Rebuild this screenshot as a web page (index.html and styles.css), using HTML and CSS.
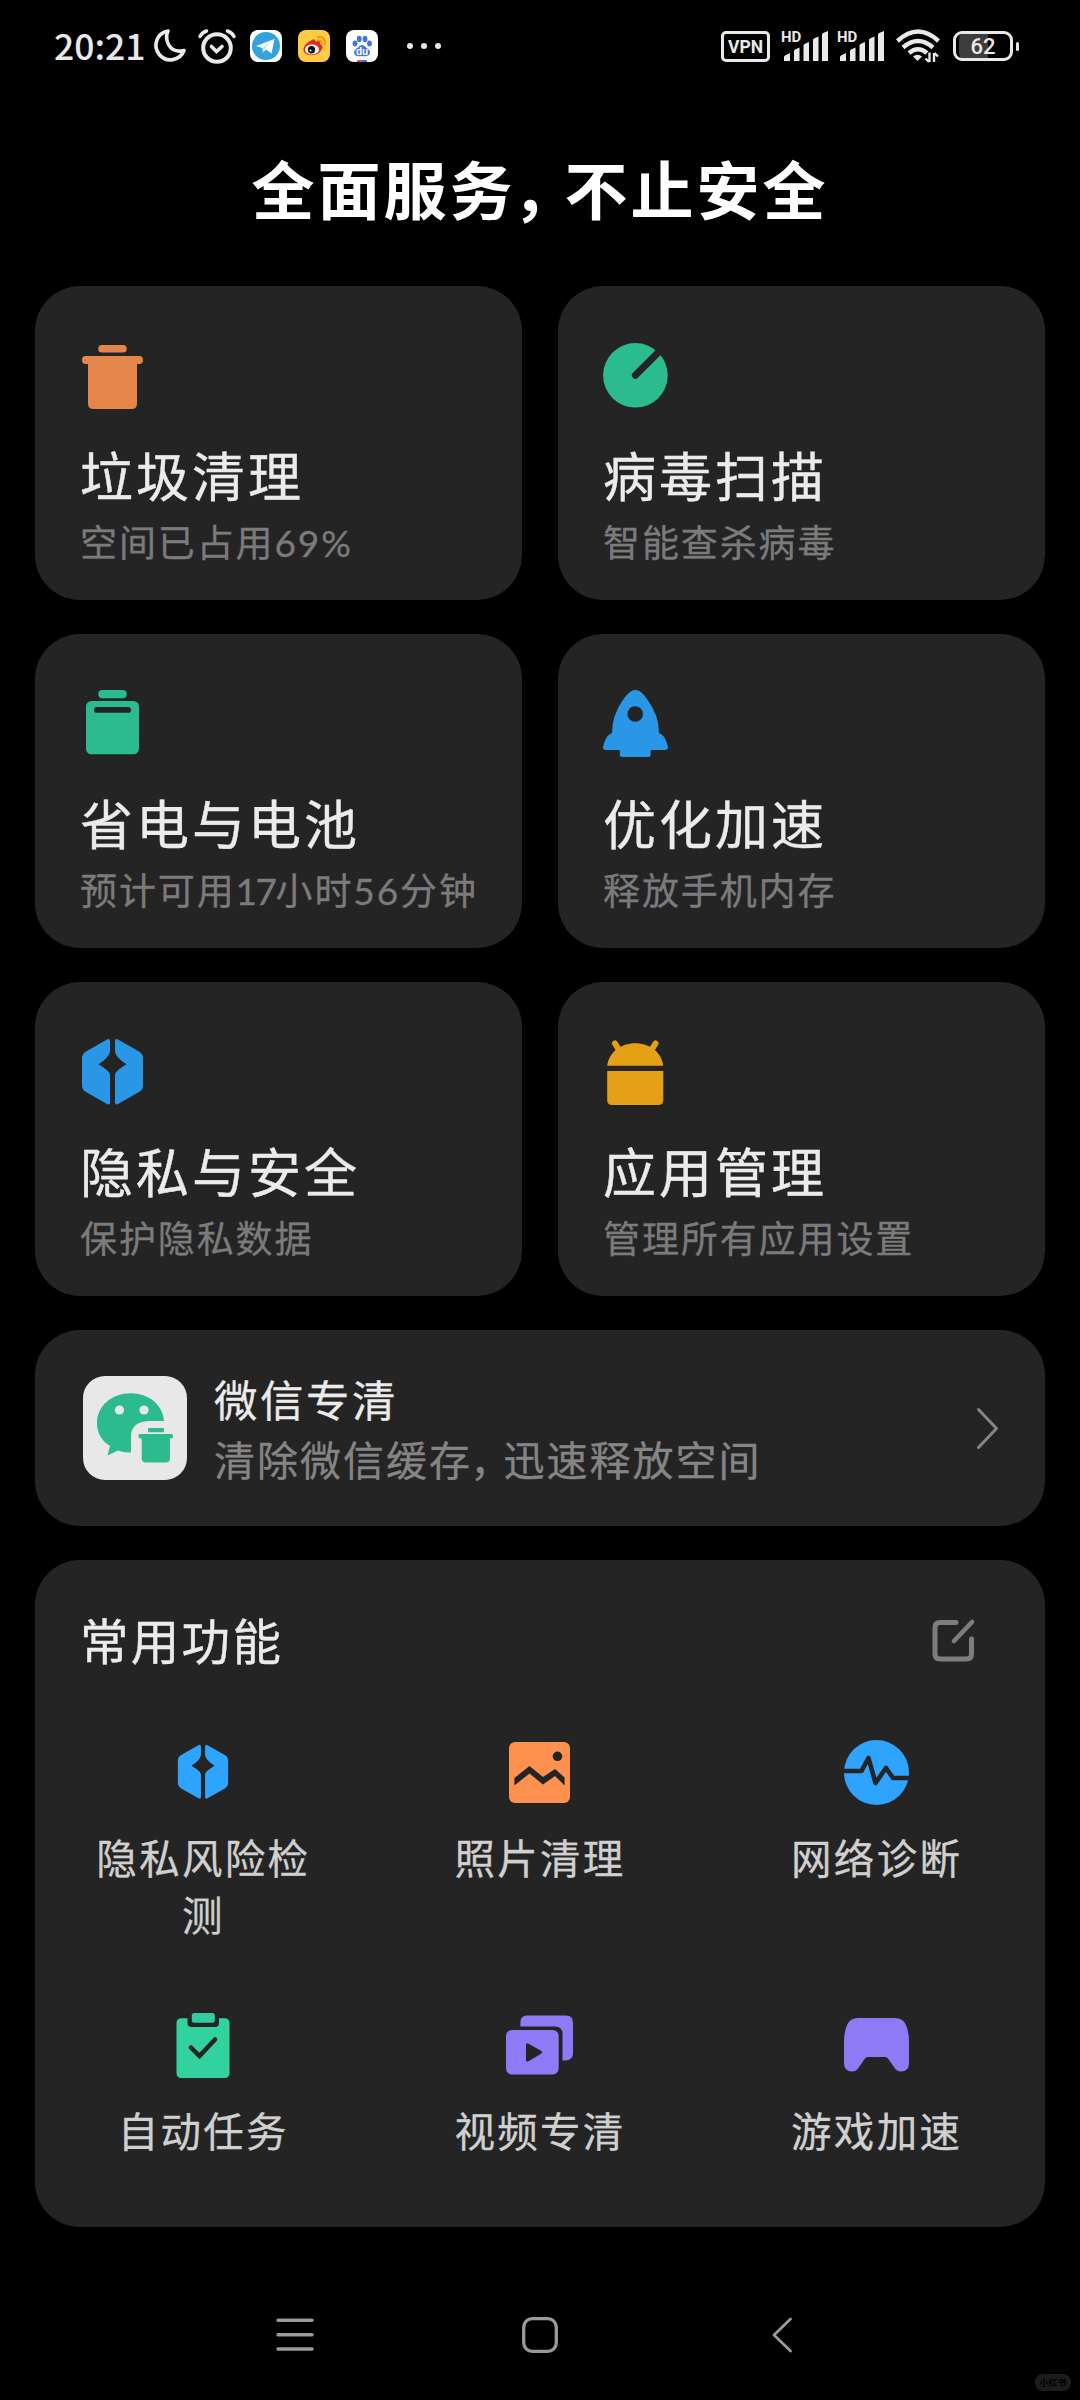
FILE: index.html
```html
<!DOCTYPE html>
<html lang="zh-CN">
<head>
<meta charset="utf-8">
<title>手机管家</title>
<link rel="stylesheet" href="styles.css">
</head>
<body>
<svg class="defs" width="0" height="0">
  <symbol id="shield" viewBox="0 0 65 68">
    <path d="M27 1.5Q30 0 30 3V13Q30 19 18.5 26.3Q30 33 30 37V64.500Q30 67.500 27 66L6 54Q2 51.500 2 47.500V20Q2 16 6 13.500Z"/>
    <path d="M38 1.500Q35 0 35 3V13Q35 19 46.500 26.300Q35 33 35 37V64.500Q35 67.500 38 66L59 54Q63 51.500 63 47.500V20Q63 16 59 13.500Z"/>
  </symbol>
  <symbol id="signal" viewBox="0 0 46 31">
    <path d="M2 30V26Q2 25 3 24.500L8 22V30ZM12 30V20Q12 19 13 18.500L17.500 16.500V30ZM21.500 30V15Q21.500 13.500 22.500 13L27 11V30ZM31 30V9Q31 8 32 7.500L36.500 5.500V30ZM40 30V4Q40 2.500 41 2L46 0V30Z"/>
  </symbol>
</svg>

<header class="status">
  <div class="status-left">
    <span class="time">20:21</span>
    <svg class="moon" width="34" height="34" viewBox="0 0 34 34"><path d="M16 2A14.500 14.500 0 1 0 32 21.500Q21 24 16.500 15.500Q13 8.500 16 2Z" fill="none" stroke="#e9e9e9" stroke-width="3.600" stroke-linejoin="round"/></svg>
    <svg class="alarm" width="38" height="35" viewBox="0 0 38 35"><g fill="none" stroke="#e9e9e9" stroke-width="4" stroke-linecap="round"><circle cx="19" cy="19" r="13.800"/><path d="M13.500 17.500L18.500 22.500L24 17.500" stroke-width="3.600"/><path d="M2 7.500Q4 3.500 8.500 2M36 7.500Q34 3.500 29.500 2" stroke-width="3.500"/></g></svg>
    <svg class="app" width="32" height="32" viewBox="0 0 32 32"><rect width="32" height="32" rx="8" fill="#fff"/><circle cx="16" cy="16" r="14" fill="#34a3dc"/><path d="M6 16L24.500 9L21.500 23.500L16 19.500L13 22.500L12.500 18Z" fill="#fff"/><path d="M12.500 18L20 12.500L14.500 18.700L13 22.500Z" fill="#bcdcf0"/></svg>
    <svg class="app" width="32" height="32" viewBox="0 0 32 32"><rect width="32" height="32" rx="8" fill="#fdcb45"/><path d="M14 10Q17 8 17.500 11.500Q23 9.500 22 14Q26 15.500 23.500 20Q20 26 12 25Q5 24 5.500 18.500Q7 13 14 10Z" fill="#dc2b1f"/><ellipse cx="14" cy="19.500" rx="7" ry="5" fill="#fff"/><circle cx="13.500" cy="19.800" r="3.700" fill="#111"/><circle cx="12.500" cy="20.500" r="1" fill="#fff"/><path d="M20 7Q27 6 27 14M20 10.500Q24 10 23.500 14" fill="none" stroke="#f0920f" stroke-width="1.800" stroke-linecap="round"/></svg>
    <svg class="app" width="32" height="32" viewBox="0 0 32 32"><rect width="32" height="32" rx="8" fill="#fff"/><g fill="#4474d9"><ellipse cx="9" cy="13.500" rx="2.400" ry="3"/><ellipse cx="13.200" cy="9" rx="2.400" ry="3.200"/><ellipse cx="19" cy="9" rx="2.400" ry="3.200"/><ellipse cx="23.500" cy="13.500" rx="2.400" ry="3"/><path d="M16 15Q18.500 15 20 17.500Q24.500 20.500 24 23Q23 27 16 26Q9 27 8 23Q8 20 12 17.500Q13.500 15 16 15Z"/></g><text x="16" y="24.500" text-anchor="middle" class="du">du</text><path d="M11 30H16V32H11Z" fill="#e4504a"/><path d="M16 30H21V32H16Z" fill="#4474d9"/></svg>
    <svg class="dots" width="34" height="6" viewBox="0 0 34 6" fill="#e9e9e9"><circle cx="3" cy="3" r="3"/><circle cx="17" cy="3" r="3"/><circle cx="31" cy="3" r="3"/></svg>
  </div>
  <div class="status-right">
    <span class="vpn">VPN</span>
    <span class="sim"><span class="hd">HD</span><svg width="46" height="31"><use href="#signal"/></svg></span>
    <span class="sim"><span class="hd">HD</span><svg width="46" height="31"><use href="#signal"/></svg></span>
    <svg class="wifi" width="44" height="34" viewBox="0 0 44 34"><g fill="none" stroke="#e9e9e9" stroke-width="4.500"><path d="M1.500 12Q22 -7 42.500 12"/><path d="M7 18.500Q22 5.500 37 18.500"/><path d="M13 24Q22 16.500 31 24"/></g><path d="M17 27.500Q21.500 24 26 27.500L21.500 32Z" fill="#e9e9e9"/><path d="M33.500 23.500V33M33 33L29.500 29.500M38 33V24M38.500 24L42 27.500" fill="none" stroke="#e9e9e9" stroke-width="2.400"/></svg>
    <span class="battery">62</span><span class="nub"></span>
  </div>
</header>

<main class="content">
  <h1 class="headline">全面服务<span class="comma">，</span>不止安全</h1>

  <section class="grid">
    <article class="card">
      <svg class="card-icon orange" viewBox="0 0 65 68"><rect x="18.300" y="3" width="28.400" height="7.500" rx="3.500"/><path d="M5.500 14H59.500Q63 14 63 18T59.500 22H57V61.500Q57 67 51.500 67H13.500Q8 67 8 61.500V22H5.500Q2 22 2 18T5.500 14Z"/></svg>
      <h2>垃圾清理</h2><p>空间已占用69%</p>
    </article>
    <article class="card">
      <svg class="card-icon green" viewBox="0 0 65 68"><circle cx="32.400" cy="33.300" r="32.300"/><path class="cut" d="M32.400 33.300L60 5.700" stroke-width="7"/></svg>
      <h2>病毒扫描</h2><p>智能查杀病毒</p>
    </article>
    <article class="card">
      <svg class="card-icon green" viewBox="0 0 65 68"><rect x="18.300" y="0" width="28.400" height="8.300" rx="4"/><rect x="6" y="11" width="53" height="53.300" rx="5.500"/><rect class="hole" x="14" y="17" width="37" height="5.800" rx="2.900"/></svg>
      <h2>省电与电池</h2><p>预计可用<span class="tight">17</span>小时56分钟</p>
    </article>
    <article class="card">
      <svg class="card-icon blue" viewBox="0 0 65 68"><path d="M32.400 0Q38 0 44 9Q56 25 56 43Q60 44.500 61.500 47.500Q64 52 65 57Q65 60 62 60H47.700V64.500Q47.700 67 45 67H19.500Q16.800 67 16.800 64.500V60H3Q0 60 0 57Q1 52 3.500 47.500Q5 44.500 9 43Q9 25 20.500 9Q27 0 32.400 0Z"/><circle class="hole" cx="32.200" cy="24" r="7.800"/></svg>
      <h2>优化加速</h2><p>释放手机内存</p>
    </article>
    <article class="card">
      <svg class="card-icon blue" viewBox="0 0 65 68"><use href="#shield"/></svg>
      <h2>隐私与安全</h2><p>保护隐私数据</p>
    </article>
    <article class="card">
      <svg class="card-icon yellow" viewBox="0 0 65 68"><path d="M4.200 27.700C6 14 18 5.300 32.200 5.300S58.500 14 60.200 27.700Z"/><path d="M4.200 33H60.300V62Q60.300 67 55.300 67H9.200Q4.200 67 4.200 62Z"/><path d="M12 5.500L17 13.500M52.500 5.500L47.500 13.500" fill="none" stroke="#e4a116" stroke-width="6" stroke-linecap="round"/></svg>
      <h2>应用管理</h2><p>管理所有应用设置</p>
    </article>
  </section>

  <section class="banner">
    <svg class="wechat" width="104" height="104" viewBox="0 0 104 104"><rect width="104" height="104" rx="22" fill="#e8e8e8"/><path d="M47.500 17.300C66 17.300 80 29 81 45H66Q48 46 48 60V76.500Q41 77 35 74.500L24.500 79.500L27 70Q14 62 14 47C14 30 29 17.300 47.500 17.300Z" fill="#2bbb8f"/><circle cx="36.500" cy="34" r="4.600" fill="#e8e8e8"/><circle cx="61" cy="34" r="4.600" fill="#e8e8e8"/><g fill="#2bbb8f"><rect x="65" y="52" width="16" height="4.300" rx="1"/><path d="M57 58H88.500Q90 58 90 60T88.500 62.500H87V82Q87 86.500 82.500 86.500H63Q58.700 86.500 58.700 82V62.500H57Q55.500 62.500 55.500 60T57 58Z"/></g></svg>
    <div class="banner-text">
      <h3>微信专清</h3>
      <p>清除微信缓存<span class="comma">，</span>迅速释放空间</p>
    </div>
    <svg class="chevron" width="22" height="41" viewBox="0 0 22 41"><path d="M1.500 1.500L19.500 20.500L1.500 39.500" fill="none" stroke="#858585" stroke-width="3" stroke-linecap="round" stroke-linejoin="round"/></svg>
  </section>

  <section class="panel">
    <div class="panel-head">
      <h3>常用功能</h3>
      <svg width="43" height="43" viewBox="0 0 43 43"><g fill="none" stroke="#7d7d7d" stroke-width="5" stroke-linecap="round"><path d="M24 3.500H8Q3 3.500 3 8.500V35Q3 40 8 40H34.500Q39.500 40 39.500 35V20"/><path d="M22 22L40 3" stroke-width="4.600"/></g></svg>
    </div>
    <div class="tools">
      <div class="tool"><span class="tool-icon"><svg width="54" height="56" viewBox="0 0 65 68" fill="#2ea4ff"><use href="#shield"/></svg></span><span class="label">隐私风险检测</span></div>
      <div class="tool"><span class="tool-icon"><svg width="61" height="61" viewBox="0 0 61 61"><rect width="61" height="61" rx="6" fill="#ff914f"/><circle class="hole" cx="48.500" cy="14.300" r="4.800"/><path class="hole" d="M5.400 36L20.500 24L34 35L46 27L55.600 35.500V43.500L46 34L34 42.500L20.500 31.500L5.400 43.500Z"/></svg></span><span class="label">照片清理</span></div>
      <div class="tool"><span class="tool-icon"><svg width="65" height="65" viewBox="0 0 65 65"><circle cx="32.500" cy="32.500" r="32.500" fill="#2ea4ff"/><path d="M0 31H17.500L24.500 18L31.500 43L42 28L49 38H65" fill="none" stroke="#242424" stroke-width="4.600" stroke-linejoin="round"/></svg></span><span class="label">网络诊断</span></div>
      <div class="tool"><span class="tool-icon"><svg width="54" height="65" viewBox="0 0 54 65"><path d="M5.500 5.300H11.500V10Q11.500 14 15.500 14H39Q43 14 43 10V5.300H48.500Q53.500 5.300 53.500 10V60Q53.500 65 48.500 65H5.500Q.5 65 .5 60V10Q.5 5.300 5.500 5.300Z" fill="#31d29e"/><rect x="15.800" y="0" width="23" height="9.700" rx="2.500" fill="#35cba0"/><path d="M15 34.500L23.500 43L39 26.500" fill="none" stroke="#242424" stroke-width="4.500" stroke-linecap="round"/></svg></span><span class="label">自动任务</span></div>
      <div class="tool"><span class="tool-icon"><svg width="67" height="60" viewBox="0 0 67 60"><path d="M21 .5H60Q67 .5 67 7.500V38Q67 45 60 45.500H56.500V19Q56.500 11.500 49 11.500H14.400V7Q14.400 .5 21 .5Z" fill="#8f7af6"/><rect x="0" y="15" width="52.700" height="44.500" rx="6" fill="#8f7af6"/><path class="hole" d="M20 30Q20 27 23 29L35 35.800Q37 37.300 35 38.800L23 46Q20 48 20 45Z"/></svg></span><span class="label">视频专清</span></div>
      <div class="tool"><span class="tool-icon"><svg width="65" height="54" viewBox="0 0 65 54"><path d="M14 0H51Q59 0 62 7Q65 14 65 24V45Q65 53.500 57 53.500Q52.500 53.500 50 49L44 40.500Q43 39 41 39H24Q22 39 21 40.500L15 49Q12.500 53.500 8 53.500Q0 53.500 0 45V24Q0 14 3 7Q6 0 14 0Z" fill="#8f7af6"/></svg></span><span class="label">游戏加速</span></div>
    </div>
  </section>
</main>

<nav class="navbar">
  <svg width="36" height="36" viewBox="0 0 36 36"><path d="M1 3.300H35M1 17.700H35M1 32H35" stroke-width="3.500"/></svg>
  <svg width="36" height="36" viewBox="0 0 36 36"><rect x="1.700" y="1.700" width="32.600" height="32.600" rx="8.500" stroke-width="3.300"/></svg>
  <svg width="36" height="36" viewBox="0 0 36 36"><path d="M23.500 2L7 18L23.500 34" stroke-width="2.800" stroke-linejoin="round"/></svg>
  <span class="mark">小红书</span>
</nav>
</body>
</html>
```
FILE: styles.css
```css
* { box-sizing: border-box; margin: 0; padding: 0; font-weight: 400; }

body {
  width: 1080px;
  height: 2400px;
  background: #000;
  color: #ebebeb;
  font-family: "Noto Sans CJK SC", sans-serif;
  display: flex;
  flex-direction: column;
  overflow: hidden;
}

svg { display: block; overflow: visible; flex: none; }
.defs { position: absolute; }

.status {
  height: 92px;
  flex: none;
  display: flex;
  justify-content: space-between;
  padding: 0 61px 0 54px;
  color: #e9e9e9;
}
.status-left, .status-right { display: flex; align-items: center; }
.time { width: 98px; font-size: 35.500px; font-weight: 500; line-height: 92px; padding-bottom: 2px; white-space: nowrap; }
.moon { margin-right: 12px; }
.alarm { margin-right: 14px; }
.app { margin-right: 16px; }
.dots { margin-left: 13px; }
.du { font: 700 10px "Liberation Sans", sans-serif; fill: #fff; }

.vpn {
  width: 49px;
  height: 31px;
  border: 3.500px solid #e9e9e9;
  border-radius: 5px;
  font: 700 17.500px/26px Roboto, sans-serif;
  text-align: center;
  margin-right: 12px;
}
.sim { position: relative; width: 46px; height: 31px; fill: #e9e9e9; margin-right: 10px; }
.hd { position: absolute; left: -1px; top: 1px; font: 700 15px/11px Roboto, sans-serif; }
.wifi { margin: 0 13px 0 2px; }
.battery {
  width: 60px;
  height: 30px;
  border: 3px solid #e9e9e9;
  border-radius: 9px;
  font: 500 22px/25px Roboto, sans-serif;
  text-align: center;
  background: linear-gradient(90deg, #3d3d3d 60%, #000 60%) content-box;
  padding: 0 3px;
}
.nub { width: 3px; height: 9px; background: #e9e9e9; border-radius: 2px; margin-left: 3px; }

.content { flex: 1; padding: 0 35px; display: flex; flex-direction: column; }
.headline {
  height: 160px;
  margin: 49px 0 -15px;
  line-height: 92px;
  font-size: 63px;
  font-weight: 700;
  letter-spacing: 3px;
  text-align: center;
  color: #fff;
}
.headline .comma { font-weight: 700; margin-left: -3px; letter-spacing: -11px; }

.grid { display: grid; grid-template-columns: 487px 487px; gap: 34px 36px; }
.card { height: 314px; background: #242424; border-radius: 45px; padding: 56px 45px 0; }
.card-icon { width: 65px; height: 68px; }
.card h2 { margin-top: 28px; font-size: 53px; line-height: 72px; letter-spacing: 3px; white-space: nowrap; -webkit-text-stroke: .4px; }
.card p {
  margin-top: 8px;
  font-family: Lato, "Noto Sans CJK SC", sans-serif;
  font-size: 37px;
  line-height: 50px;
  letter-spacing: 1.900px;
  color: #7b7b7b;
  white-space: nowrap;
  -webkit-text-stroke: .3px;
}
.tight { letter-spacing: -1.500px; }
.orange { fill: #e68549; }
.green { fill: #2bbb8f; }
.blue { fill: #2a97e6; }
.yellow { fill: #e4a116; }
.hole { fill: #242424; }
.cut { fill: none; stroke: #242424; stroke-linecap: round; }

.banner {
  height: 196px;
  margin-top: 34px;
  background: #242424;
  border-radius: 45px;
  padding: 0 46px 0 48px;
  display: flex;
  align-items: center;
}
.banner-text { flex: 1; margin-left: 27px; }
.banner h3 { margin-top: 1px; font-size: 43.500px; line-height: 60px; letter-spacing: 2.500px; -webkit-text-stroke: .3px; }
.banner p { margin-top: -1px; font-size: 41px; line-height: 60px; letter-spacing: 2px; color: #858585; -webkit-text-stroke: .3px; }
.banner .comma { margin-left: -2px; letter-spacing: -7.500px; }

.panel { height: 667px; margin-top: 34px; background: #242424; border-radius: 45px; }
.panel-head { height: 162px; padding: 0 70px 2px 45px; display: flex; align-items: center; justify-content: space-between; }
.panel-head h3 { margin-top: -3px; font-size: 48.500px; letter-spacing: 2.300px; line-height: 70px; -webkit-text-stroke: .4px; }
.tools { display: grid; grid-template-columns: repeat(3, 1fr); grid-auto-rows: 273px; }
.tool { display: flex; flex-direction: column; align-items: center; padding-top: 16px; }
.tool-icon { height: 68px; display: flex; align-items: center; }
.label { width: 224px; margin-top: 22px; font-size: 40.500px; line-height: 57px; letter-spacing: 2.300px; text-align: center; color: #d0d0d0; -webkit-text-stroke: .3px; }

.navbar {
  position: relative;
  height: 130px;
  flex: none;
  display: flex;
  justify-content: center;
  gap: 209px;
  padding-top: 47px;
  fill: none;
  stroke: #9a9a9a;
  stroke-linecap: round;
}
.mark {
  position: absolute;
  right: 9px;
  bottom: 9px;
  width: 36px;
  height: 17px;
  border-radius: 8px;
  background: #1c1c1c;
  color: #000;
  font-size: 9px;
  line-height: 17px;
  font-weight: 700;
  text-align: center;
}
```
